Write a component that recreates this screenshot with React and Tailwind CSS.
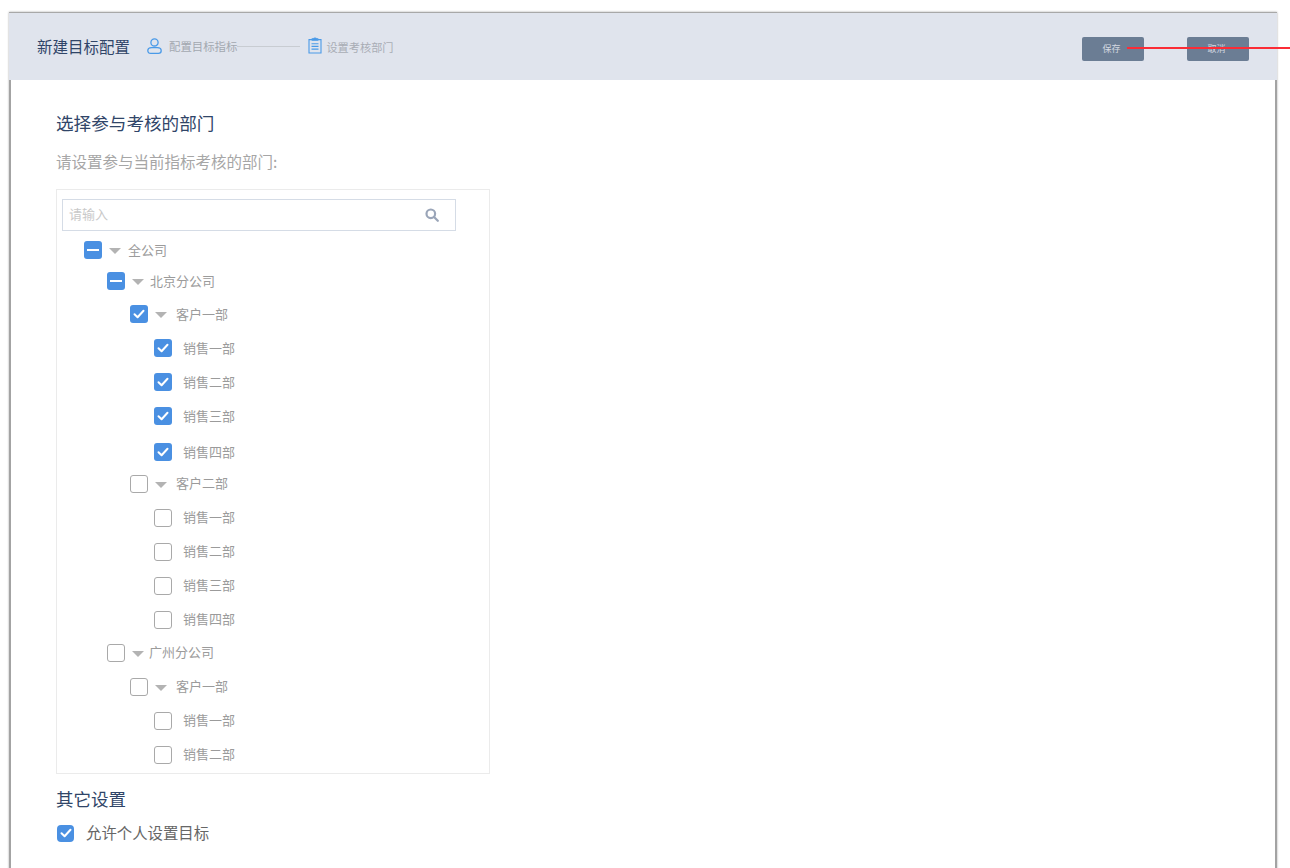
import React from 'react';

const TREE = [
  { label: '全公司', check: 'mixed', caret: true, indent: 'ml-[22px]', gap: 'mt-0', labelGap: 'ml-[7px]' },
  { label: '北京分公司', check: 'mixed', caret: true, indent: 'ml-[45px]', gap: 'mt-[13px]', labelGap: 'ml-[6px]' },
  { label: '客户一部', check: 'on', caret: true, indent: 'ml-[68px]', gap: 'mt-[15px]', labelGap: 'ml-[9px]' },
  { label: '销售一部', check: 'on', indent: 'ml-[92px]', gap: 'mt-4', labelGap: 'ml-[11px]' },
  { label: '销售二部', check: 'on', indent: 'ml-[92px]', gap: 'mt-4', labelGap: 'ml-[11px]' },
  { label: '销售三部', check: 'on', indent: 'ml-[92px]', gap: 'mt-4', labelGap: 'ml-[11px]' },
  { label: '销售四部', check: 'on', indent: 'ml-[92px]', gap: 'mt-[18px]', labelGap: 'ml-[11px]' },
  { label: '客户二部', check: 'off', caret: true, indent: 'ml-[68px]', gap: 'mt-[14px]', labelGap: 'ml-[9px] -translate-y-px' },
  { label: '销售一部', check: 'off', indent: 'ml-[92px]', gap: 'mt-4', labelGap: 'ml-[11px] -translate-y-px' },
  { label: '销售二部', check: 'off', indent: 'ml-[92px]', gap: 'mt-4', labelGap: 'ml-[11px] -translate-y-px' },
  { label: '销售三部', check: 'off', indent: 'ml-[92px]', gap: 'mt-4', labelGap: 'ml-[11px] -translate-y-px' },
  { label: '销售四部', check: 'off', indent: 'ml-[92px]', gap: 'mt-4', labelGap: 'ml-[11px] -translate-y-px' },
  { label: '广州分公司', check: 'off', caret: true, indent: 'ml-[45px]', gap: 'mt-[15px]', labelGap: 'ml-[5px] -translate-y-px' },
  { label: '客户一部', check: 'off', caret: true, indent: 'ml-[68px]', gap: 'mt-4', labelGap: 'ml-[9px] -translate-y-px' },
  { label: '销售一部', check: 'off', indent: 'ml-[92px]', gap: 'mt-4', labelGap: 'ml-[11px] -translate-y-px' },
  { label: '销售二部', check: 'off', indent: 'ml-[92px]', gap: 'mt-4', labelGap: 'ml-[11px] -translate-y-px' },
];

const Tick = () => (
  <svg width="12" height="10" viewBox="0 0 12 10" fill="none" stroke="white" strokeWidth="2" strokeLinecap="round" strokeLinejoin="round">
    <path d="M1.5 5.2 4.6 8.2 10.5 1.8" />
  </svg>
);

const CheckBox = ({ state }) => {
  if (state === 'off') {
    return <span className="w-[18px] h-[18px] shrink-0 rounded-[3px] border border-[#a9a9a9] bg-white" />;
  }
  return (
    <span className="w-[18px] h-[18px] shrink-0 rounded-[3px] bg-[#4a90e2] flex items-center justify-center">
      {state === 'on' ? <Tick /> : <span className="w-[12px] h-[2px] bg-white" />}
    </span>
  );
};

const Caret = () => (
  <span className="ml-[7px] w-0 h-0 border-x-[6px] border-x-transparent border-t-[6px] border-t-[#b3b3b3] mt-px" />
);

const TreeRow = ({ item }) => (
  <div className={`flex items-center h-[18px] ${item.indent} ${item.gap}`}>
    <CheckBox state={item.check} />
    {item.caret && <Caret />}
    <span className={`${item.labelGap} text-[13px] leading-[18px] text-[#9b9b9b]`}>{item.label}</span>
  </div>
);

const UserIcon = () => (
  <svg width="15" height="16" viewBox="0 0 15 16" fill="none" stroke="#4a9ae8" strokeWidth="1.3" className="-translate-y-px">
    <circle cx="7.5" cy="4.4" r="3.6" />
    <path d="M4.6 9.6H10.4C12.6 9.6 14.2 11 14.2 12.7 14.2 14.4 12.9 15.3 11.4 15.3H3.6C2.1 15.3 .8 14.4 .8 12.7 .8 11 2.4 9.6 4.6 9.6Z" />
  </svg>
);

const ClipboardIcon = () => (
  <svg width="14" height="17" viewBox="0 0 14 17" fill="none" stroke="#4a9ae8" strokeWidth="1.1" className="-translate-y-px">
    <path d="M4 2.6H1V16H13V2.6H10" />
    <path d="M4.2 3.2V1.8H5.8C6 .8 8 .8 8.2 1.8H9.8V3.2Z" fill="#4a9ae8" />
    <path d="M3.5 6.7H10.5M3.5 9.4H10.5M3.5 12.1H10.5" />
  </svg>
);

const SearchIcon = () => (
  <svg width="14" height="14" viewBox="0 0 14 14" fill="none" stroke="#9aa5b8" strokeWidth="2.2">
    <circle cx="5.8" cy="5.8" r="4.3" />
    <path d="M9 9 12.8 12.8" strokeLinecap="round" />
  </svg>
);

const HeaderButton = ({ children }) => (
  <button className="w-[62px] h-[24px] pr-[3px] rounded-[2px] bg-[#6b7d94] text-[9px] leading-[24px] text-[#d3d8e0]">
    {children}
  </button>
);

export default function App() {
  return (
    <div
      className="h-[868px] overflow-hidden bg-white pt-3 pl-[9px]"
      style={{ fontFamily: '"Noto Sans CJK SC", "Noto Sans", sans-serif' }}
    >
      <div className="w-[1268px] h-[870px] bg-white shadow-[0_0_2px_rgba(0,0,0,0.35)]">
        <header className="h-[68px] bg-[#e0e4ed] border-t border-[#a8a8a8] flex items-center pl-7 pr-[28px]">
          <h1 className="text-[15.5px] text-[#304568] whitespace-nowrap">新建目标配置</h1>
          <div className="ml-[17px] mt-px flex items-center">
            <UserIcon />
            <span className="ml-[7px] text-[11.4px] text-[#a3a8b0] whitespace-nowrap">配置目标指标</span>
            <span className="w-[63px] h-px bg-[#c8ccd2]" />
            <span className="ml-[8px] flex"><ClipboardIcon /></span>
            <span className="ml-[4px] text-[11.2px] text-[#a9adb5] whitespace-nowrap">设置考核部门</span>
          </div>
          <div className="relative ml-auto mt-[5px] flex gap-[43px]">
            <HeaderButton>保存</HeaderButton>
            <HeaderButton>取消</HeaderButton>
            {/* annotation line running over the save button */}
            <div className="absolute z-20 left-[45px] top-[10px] w-[163px] h-[2px] bg-red-500" />
          </div>
        </header>

        <main className="h-[802px] pl-[45px] pt-[29px] border-x-2 border-[#a3a3a3]">
          <h2 className="text-[17.6px] leading-[28px] text-[#304568]">选择参与考核的部门</h2>
          <p className="mt-[14px] text-[15.5px] leading-[20px] text-[#a6a6a6]">请设置参与当前指标考核的部门:</p>

          <section className="mt-[18px] w-[434px] h-[585px] border border-[#ebebeb] pt-[9px] pl-[5px]">
            <div className="w-[394px] h-[32px] border border-[#d5dce6] flex items-center justify-between pl-[6px] pr-[16px]">
              <span className="text-[13px] text-[#c9c9c9] -translate-y-px">请输入</span>
              <SearchIcon />
            </div>
            <div className="mt-[10px]">
              {TREE.map((item, i) => (
                <TreeRow key={i} item={item} />
              ))}
            </div>
          </section>

          <h2 className="mt-[12px] text-[17.5px] leading-[26px] text-[#304568]">其它设置</h2>
          <div className="mt-[11px] flex items-center h-[20px] ml-px">
            <span className="w-[17px] h-[17px] rounded-[4px] bg-[#4a90e2] flex items-center justify-center">
              <Tick />
            </span>
            <span className="ml-[12px] text-[15.4px] text-[#666666] whitespace-nowrap">允许个人设置目标</span>
          </div>
        </main>
      </div>
    </div>
  );
}
